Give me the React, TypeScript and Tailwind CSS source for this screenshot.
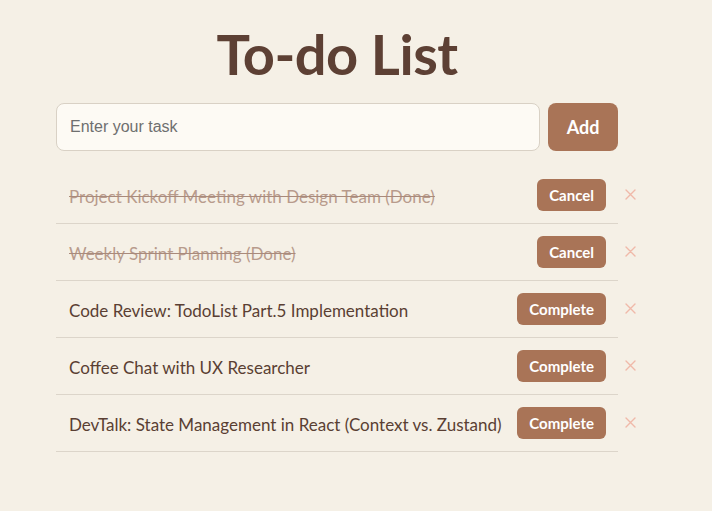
import { useState } from "react";

type Todo = { id: number; text: string; done: boolean };

const initialTodos: Todo[] = [
  { id: 1, text: "Project Kickoff Meeting with Design Team (Done)", done: true },
  { id: 2, text: "Weekly Sprint Planning (Done)", done: true },
  { id: 3, text: "Code Review: TodoList Part.5 Implementation", done: false },
  { id: 4, text: "Coffee Chat with UX Researcher", done: false },
  { id: 5, text: "DevTalk: State Management in React (Context vs. Zustand)", done: false },
];

export default function App() {
  const [todos, setTodos] = useState<Todo[]>(initialTodos);
  const [input, setInput] = useState("");

  const add = () => {
    if (!input.trim()) return;
    setTodos([...todos, { id: Date.now(), text: input.trim(), done: false }]);
    setInput("");
  };

  return (
    <div className="min-h-screen bg-[#f5f0e6] font-['Lato',sans-serif] text-[#5a3f33]">
      <div className="w-[600px] mx-auto pt-[18px]">
        <div className="w-[562px]">
          <h1 className="text-center text-[56px] leading-[72px] font-bold text-[#5d4034] tracking-[-0.5px]">
            To-do List
          </h1>

          {/* input row */}
          <div className="flex gap-2 mt-[13px]">
            <input
              value={input}
              onChange={(e) => setInput(e.target.value)}
              placeholder="Enter your task"
              className="flex-1 h-12 px-[13px] rounded-lg border border-[#d9d1c5] bg-[#fdfaf4] font-['Liberation_Sans',sans-serif] text-base text-[#5a3f33] placeholder:text-[#6f6f6f] outline-none"
            />
            <button
              onClick={add}
              className="w-[70px] h-12 rounded-lg bg-[#a97457] text-white text-lg font-bold"
            >
              Add
            </button>
          </div>

          {/* list */}
          <ul className="mt-4">
            {todos.map((t) => (
              <li key={t.id} className="relative flex items-center h-[57px] pl-[13px] pr-3 border-b border-[#dcd5ca]">
                <span
                  className={
                    t.done
                      ? "flex-1 pt-[3px] text-[17px] line-through text-[#b89b8c] decoration-[#a98a7b]"
                      : "flex-1 pt-[3px] text-[17px] text-[#5a3f33]"
                  }
                >
                  {t.text}
                </span>
                <button
                  onClick={() => setTodos(todos.map((x) => (x.id === t.id ? { ...x, done: !x.done } : x)))}
                  className="h-8 px-3 rounded-md bg-[#a97457] text-white text-[15px] font-bold"
                >
                  {t.done ? "Cancel" : "Complete"}
                </button>
                <button
                  onClick={() => setTodos(todos.filter((x) => x.id !== t.id))}
                  className="absolute left-[568px] top-[21px] w-[12px] h-[12px] flex items-center justify-center"
                >
                  <svg width="11" height="11" viewBox="0 0 11 11" stroke="#f0b9a9" strokeWidth="1.4" strokeLinecap="round">
                    <path d="M1 1 L10 10 M10 1 L1 10" />
                  </svg>
                </button>
              </li>
            ))}
          </ul>
        </div>
      </div>
    </div>
  );
}
